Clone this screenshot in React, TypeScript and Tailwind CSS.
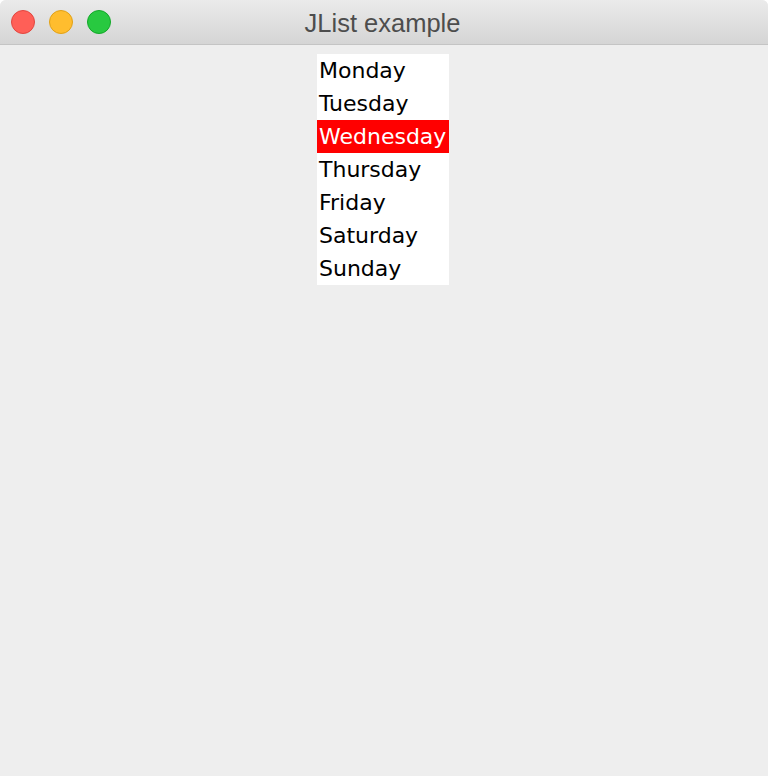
export default function App() {
  const days = ["Monday", "Tuesday", "Wednesday", "Thursday", "Friday", "Saturday", "Sunday"];
  const selected = 2;
  return (
    <div className="flex h-[776px] w-[768px] flex-col overflow-hidden rounded-t-[6px] bg-[#eeeeee]">
      {/* title bar */}
      <div className="relative flex h-[45px] shrink-0 items-center border-b border-[#c4c4c4] bg-gradient-to-b from-[#ebebeb] to-[#d5d5d5]">
        <div className="flex items-center gap-[14px] pl-[11px]">
          <span className="h-[24px] w-[24px] rounded-full border border-[#e2463f] bg-[#ff5f57]" />
          <span className="h-[24px] w-[24px] rounded-full border border-[#e1a116] bg-[#ffbd2e]" />
          <span className="h-[24px] w-[24px] rounded-full border border-[#13a829] bg-[#28c940]" />
        </div>
        <div className="absolute inset-0 flex items-center justify-center font-['Liberation_Sans',sans-serif] text-[25.5px] text-[#4d4d4d]">
          <span className="ml-[-3px] mt-[3px]">JList example</span>
        </div>
      </div>

      {/* content */}
      <div className="flex flex-1 items-start justify-center pt-[9px]">
        <ul className="ml-[-2px] w-[132px] bg-white font-['DejaVu_Sans',sans-serif] text-[22px] leading-[33px] text-black">
          {days.map((d, i) => (
            <li
              key={d}
              className={
                i === selected
                  ? "h-[33px] bg-[#ff0000] pl-[2px] pt-[1px] leading-[32px] text-white"
                  : "h-[33px] pl-[2px] pt-[1px] leading-[32px]"
              }
            >
              {d}
            </li>
          ))}
        </ul>
      </div>
    </div>
  );
}
